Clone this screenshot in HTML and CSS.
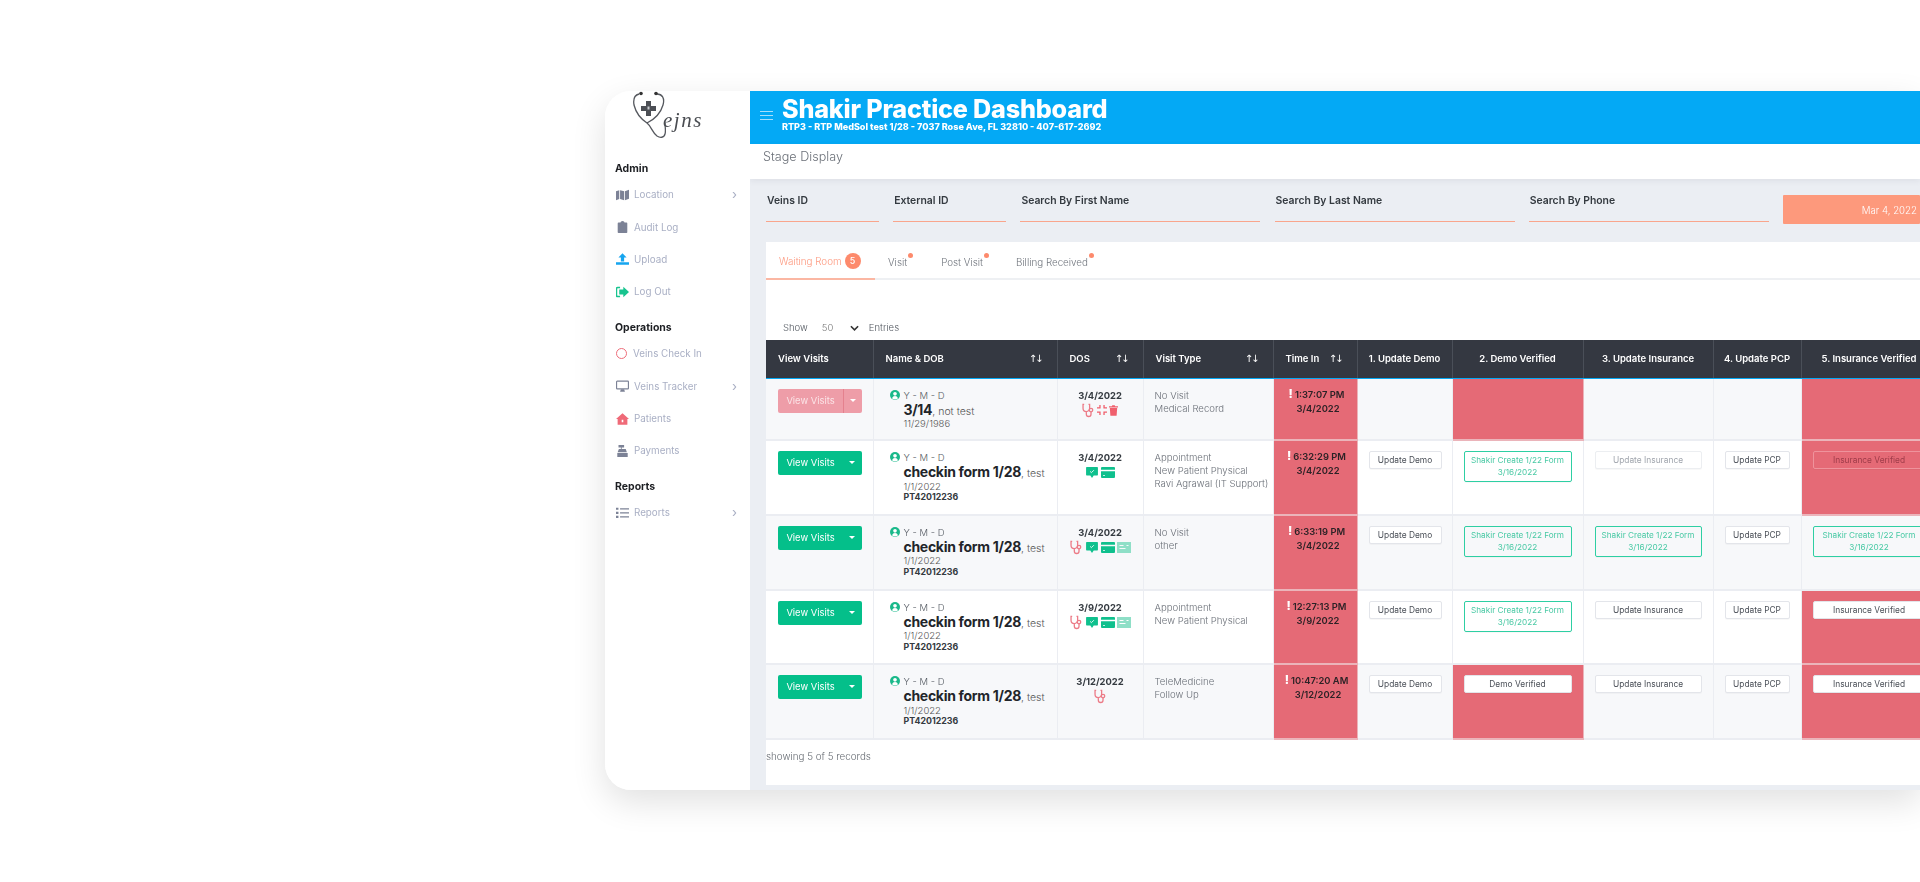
FILE: index.html
```html
<!DOCTYPE html>
<html lang="en">
<head>
<meta charset="utf-8">
<title>Shakir Practice Dashboard</title>
<link rel="stylesheet" href="styles.css">
</head>
<body>
<svg class="sprite" width="0" height="0" aria-hidden="true">
  <symbol id="i-map" viewBox="0 0 16 14"><path d="M0 2.5 4 1v11l-4 1.5zM5 1l5 1.5v11L5 12zM11 2.500 16 .5v11l-5 2z" fill="currentColor"/></symbol>
  <symbol id="i-clip" viewBox="0 0 12 15"><path d="M1 2h2.500a2.500 2 0 0 1 5 0H11a1 1 0 0 1 1 1v11a1 1 0 0 1-1 1H1a1 1 0 0 1-1-1V3a1 1 0 0 1 1-1z" fill="currentColor"/></symbol>
  <symbol id="i-up" viewBox="0 0 16 14"><path d="M8 0l5 5H10v5H6V5H3zM0 11h16v3H0z" fill="currentColor"/></symbol>
  <symbol id="i-out" viewBox="0 0 16 13"><path d="M5 1H2a1.500 1.500 0 0 0-1.500 1.500v8A1.500 1.500 0 0 0 2 12h3" fill="none" stroke="currentColor" stroke-width="2"/><path d="M9 0l7 6.500L9 13V9.500H4v-6h5z" fill="currentColor"/></symbol>
  <symbol id="i-desk" viewBox="0 0 16 14"><path d="M1.500 1h13a.800.800 0 0 1 .800.800v8a.800.800 0 0 1-.800.800h-13a.800.800 0 0 1-.800-.800v-8A.800.800 0 0 1 1.500 1z" fill="none" stroke="currentColor" stroke-width="1.400"/><path d="M5 14l1-3h4l1 3z" fill="currentColor"/></symbol>
  <symbol id="i-home" viewBox="0 0 16 14"><path d="M8 0l8 7h-2v7H2V7H0zM7 8v3h2V8z" fill="currentColor" fill-rule="evenodd"/></symbol>
  <symbol id="i-cash" viewBox="0 0 14 15"><path d="M2 0h7v3H6v2h5l1.500 4H.9L2.500 5H5V3H2zM.5 10h13v5H.5z" fill="currentColor"/></symbol>
  <symbol id="i-list" viewBox="0 0 16 13"><path d="M0 0h3v2.600H0zM0 5h3v2.600H0zM0 10h3v2.600H0zM5 .5h11v1.600H5zM5 5.500h11v1.600H5zM5 10.500h11v1.600H5z" fill="currentColor"/></symbol>
  <symbol id="i-user" viewBox="0 0 12 12"><circle cx="6" cy="6" r="6" fill="currentColor"/><circle cx="6" cy="4.600" r="2.200" fill="#fff"/><path d="M2.400 9.800a3.800 3.800 0 0 1 7.200 0 5 5 0 0 1-7.200 0z" fill="#fff"/></symbol>
  <symbol id="i-steth" viewBox="0 0 15 16"><path d="M2.500 1H1.200v4.500a3.800 3.800 0 0 0 7.600 0V1H7.500M5 9.500v2.700a2.700 2.700 0 0 0 5.400 0V9.500" fill="none" stroke="currentColor" stroke-width="1.500"/><circle cx="10.400" cy="7.500" r="2" fill="none" stroke="currentColor" stroke-width="1.500"/></symbol>
  <symbol id="i-comp" viewBox="0 0 13 13"><path d="M4.700 0v4.700H0V3h3V0zM8.300 0h1.700v3h3v1.700H8.300zM0 8.300h4.700V13H3v-3H0zM8.300 8.300H13V10h-3v3H8.300z" fill="currentColor"/></symbol>
  <symbol id="i-trash" viewBox="0 0 11 13"><path d="M0 1.200h3.500L4 .2h3l.5 1H11v1.500H0zM1 3.500h9l-.7 9.500H1.700z" fill="currentColor"/></symbol>
  <symbol id="i-chat" viewBox="0 0 14 13"><path d="M.8 0h12.400a.8.8 0 0 1 .8.800v8.400a.8.800 0 0 1-.8.800H9l-2 3-2-3H.8a.8.800 0 0 1-.8-.8V.8A.8.800 0 0 1 .8 0z" fill="currentColor"/><path d="M4.800 5.200l1.500 1.500 2.900-2.900" fill="none" stroke="#fff" stroke-width="1"/></symbol>
  <symbol id="i-card" viewBox="0 0 14 11"><path d="M1 0h12a1 1 0 0 1 1 1v1.800H0V1a1 1 0 0 1 1-1zM0 4.200h14V10a1 1 0 0 1-1 1H1a1 1 0 0 1-1-1zM2 8v.8h2V8z" fill="currentColor" fill-rule="evenodd"/></symbol>
  <symbol id="i-check" viewBox="0 0 14 11"><path d="M0 0h14v11H0zM2.500 3v1h4V3zM2.500 6v1h6V6zM9.500 3v1h2V3z" fill="currentColor" fill-rule="evenodd"/></symbol>
</svg>

<div class="stage">
<div class="window">
  <aside class="side">
    <div class="logo">
      <svg class="logo-mark" viewBox="0 0 70 50" aria-hidden="true">
        <path d="M6 3C2 4 0 8 1 14c2 8 7 14 13 18 4 3 5 9 10 13 3 2 7 2 8-2 1-3 0-7 0-11M24 3c5 0 8 4 6 11-2 7-8 14-16 18" fill="none" stroke="#55585e" stroke-width="1.300"/>
        <circle cx="8" cy="2.500" r="1.800" fill="#333"/><circle cx="23" cy="2.500" r="1.800" fill="#333"/>
        <path d="M13 10h5v5h5v5h-5v5h-5v-5H8v-5h5z" fill="#4c4f55"/>
        <path d="M14.500 15.500h2v3h-2z" fill="#c9ccd1"/>
        <text class="logo-text" x="30" y="36">ejns</text>
      </svg>
    </div>
    <h4 class="sec">Admin</h4>
    <a class="item"><svg class="ic grey"><use href="#i-map"/></svg><span>Location</span><b class="chev">›</b></a>
    <a class="item"><svg class="ic grey"><use href="#i-clip"/></svg><span>Audit Log</span></a>
    <a class="item"><svg class="ic blue"><use href="#i-up"/></svg><span>Upload</span></a>
    <a class="item"><svg class="ic green"><use href="#i-out"/></svg><span>Log Out</span></a>
    <h4 class="sec sec-gap">Operations</h4>
    <a class="item"><i class="ring"></i><span>Veins Check In</span></a>
    <a class="item"><svg class="ic grey"><use href="#i-desk"/></svg><span>Veins Tracker</span><b class="chev">›</b></a>
    <a class="item"><svg class="ic red"><use href="#i-home"/></svg><span>Patients</span></a>
    <a class="item"><svg class="ic grey"><use href="#i-cash"/></svg><span>Payments</span></a>
    <h4 class="sec sec-gap">Reports</h4>
    <a class="item"><svg class="ic grey"><use href="#i-list"/></svg><span>Reports</span><b class="chev">›</b></a>
  </aside>

  <main class="main">
    <header class="top">
      <div class="burger"><i></i><i></i><i></i></div>
      <div>
        <h1>Shakir Practice Dashboard</h1>
        <p>RTP3 - RTP MedSol test 1/28 - 7037 Rose Ave, FL 32810 - 407-617-2692</p>
      </div>
    </header>
    <div class="crumb">Stage Display</div>

    <div class="content">
      <div class="filters">
        <label class="field">Veins ID</label>
        <label class="field">External ID</label>
        <label class="field">Search By First Name</label>
        <label class="field">Search By Last Name</label>
        <label class="field">Search By Phone</label>
        <div class="date">Mar 4, 2022</div>
      </div>

      <section class="card">
        <nav class="tabs">
          <a class="tab active">Waiting Room<span class="badge">5</span></a>
          <a class="tab">Visit<i class="dot"></i></a>
          <a class="tab">Post Visit<i class="dot"></i></a>
          <a class="tab">Billing Received<i class="dot"></i></a>
        </nav>
        <div class="show">
          <span>Show</span>
          <span class="select"><span>50</span><svg viewBox="0 0 10 6"><path d="M1 1l4 4 4-4" fill="none" stroke="#333" stroke-width="1.800"/></svg></span>
          <span>Entries</span>
        </div>

        <table class="grid">
          <colgroup>
            <col class="c1"><col class="c2"><col class="c3"><col class="c4"><col class="c5"><col class="c6"><col class="c7"><col class="c8"><col class="c9"><col class="c10">
          </colgroup>
          <thead>
            <tr>
              <th class="h-view">View Visits</th>
              <th><div class="sort"><span>Name &amp; DOB</span><span class="arrows">↑↓</span></div></th>
              <th><div class="sort"><span>DOS</span><span class="arrows">↑↓</span></div></th>
              <th><div class="sort"><span>Visit Type</span><span class="arrows">↑↓</span></div></th>
              <th><div class="sort"><span>Time In</span><span class="arrows">↑↓</span></div></th>
              <th class="mid">1. Update Demo</th>
              <th class="mid">2. Demo Verified</th>
              <th class="mid">3. Update Insurance</th>
              <th class="mid">4. Update PCP</th>
              <th class="mid">5. Insurance Verified</th>
            </tr>
          </thead>
          <tbody>
            <tr class="r1">
              <td><div class="split off"><span>View Visits</span><span class="caret"></span></div></td>
              <td class="who">
                <div class="ymd"><svg class="u"><use href="#i-user"/></svg>Y - M - D</div>
                <div class="nm"><b>3/14</b>, not test</div>
                <div class="dob">11/29/1986</div>
              </td>
              <td class="dos">
                <b>3/4/2022</b>
                <div class="icons"><svg class="s"><use href="#i-steth"/></svg><svg class="k red2"><use href="#i-comp"/></svg><svg class="t red2"><use href="#i-trash"/></svg></div>
              </td>
              <td class="vt">No Visit<br>Medical Record</td>
              <td class="alert"><div class="tm"><i>!</i>1:37:07 PM</div><div>3/4/2022</div></td>
              <td></td><td class="alert"></td><td></td><td></td><td class="alert"></td>
            </tr>
            <tr>
              <td><div class="split"><span>View Visits</span><span class="caret"></span></div></td>
              <td class="who">
                <div class="ymd"><svg class="u"><use href="#i-user"/></svg>Y - M - D</div>
                <div class="nm"><b>checkin form 1/28</b>, test</div>
                <div class="dob">1/1/2022</div>
                <div class="pt">PT42012236</div>
              </td>
              <td class="dos">
                <b>3/4/2022</b>
                <div class="icons"><svg class="c"><use href="#i-chat"/></svg><svg class="c"><use href="#i-card"/></svg></div>
              </td>
              <td class="vt">Appointment<br>New Patient Physical<br>Ravi Agrawal (IT Support)</td>
              <td class="alert"><div class="tm"><i>!</i>6:32:29 PM</div><div>3/4/2022</div></td>
              <td><a class="btn">Update Demo</a></td>
              <td><a class="btn ok">Shakir Create 1/22 Form<br>3/16/2022</a></td>
              <td><a class="btn dim">Update Insurance</a></td>
              <td><a class="btn">Update PCP</a></td>
              <td class="alert"><a class="btn ghost">Insurance Verified</a></td>
            </tr>
            <tr>
              <td><div class="split"><span>View Visits</span><span class="caret"></span></div></td>
              <td class="who">
                <div class="ymd"><svg class="u"><use href="#i-user"/></svg>Y - M - D</div>
                <div class="nm"><b>checkin form 1/28</b>, test</div>
                <div class="dob">1/1/2022</div>
                <div class="pt">PT42012236</div>
              </td>
              <td class="dos">
                <b>3/4/2022</b>
                <div class="icons"><svg class="s"><use href="#i-steth"/></svg><svg class="c"><use href="#i-chat"/></svg><svg class="c"><use href="#i-card"/></svg><svg class="c pale"><use href="#i-check"/></svg></div>
              </td>
              <td class="vt">No Visit<br>other</td>
              <td class="alert"><div class="tm"><i>!</i>6:33:19 PM</div><div>3/4/2022</div></td>
              <td><a class="btn">Update Demo</a></td>
              <td><a class="btn ok">Shakir Create 1/22 Form<br>3/16/2022</a></td>
              <td><a class="btn ok">Shakir Create 1/22 Form<br>3/16/2022</a></td>
              <td><a class="btn">Update PCP</a></td>
              <td><a class="btn ok">Shakir Create 1/22 Form<br>3/16/2022</a></td>
            </tr>
            <tr>
              <td><div class="split"><span>View Visits</span><span class="caret"></span></div></td>
              <td class="who">
                <div class="ymd"><svg class="u"><use href="#i-user"/></svg>Y - M - D</div>
                <div class="nm"><b>checkin form 1/28</b>, test</div>
                <div class="dob">1/1/2022</div>
                <div class="pt">PT42012236</div>
              </td>
              <td class="dos">
                <b>3/9/2022</b>
                <div class="icons"><svg class="s"><use href="#i-steth"/></svg><svg class="c"><use href="#i-chat"/></svg><svg class="c"><use href="#i-card"/></svg><svg class="c pale"><use href="#i-check"/></svg></div>
              </td>
              <td class="vt">Appointment<br>New Patient Physical</td>
              <td class="alert"><div class="tm"><i>!</i>12:27:13 PM</div><div>3/9/2022</div></td>
              <td><a class="btn">Update Demo</a></td>
              <td><a class="btn ok">Shakir Create 1/22 Form<br>3/16/2022</a></td>
              <td><a class="btn">Update Insurance</a></td>
              <td><a class="btn">Update PCP</a></td>
              <td class="alert"><a class="btn">Insurance Verified</a></td>
            </tr>
            <tr>
              <td><div class="split"><span>View Visits</span><span class="caret"></span></div></td>
              <td class="who">
                <div class="ymd"><svg class="u"><use href="#i-user"/></svg>Y - M - D</div>
                <div class="nm"><b>checkin form 1/28</b>, test</div>
                <div class="dob">1/1/2022</div>
                <div class="pt">PT42012236</div>
              </td>
              <td class="dos">
                <b>3/12/2022</b>
                <div class="icons"><svg class="s"><use href="#i-steth"/></svg></div>
              </td>
              <td class="vt">TeleMedicine<br>Follow Up</td>
              <td class="alert"><div class="tm"><i>!</i>10:47:20 AM</div><div>3/12/2022</div></td>
              <td><a class="btn">Update Demo</a></td>
              <td class="alert"><a class="btn">Demo Verified</a></td>
              <td><a class="btn">Update Insurance</a></td>
              <td><a class="btn">Update PCP</a></td>
              <td class="alert"><a class="btn">Insurance Verified</a></td>
            </tr>
          </tbody>
        </table>
        <div class="records">showing 5 of 5 records</div>
      </section>
    </div>
  </main>
</div>
</div>
</body>
</html>
```

FILE: styles.css
```css
* { box-sizing: border-box; }
html, body { margin: 0; height: 100%; background: #fff; overflow: hidden; }
body { font-family: Inter, "Open Sans", sans-serif; color: #343a40; }
.sprite { position: absolute; }

.stage { padding: 91px 0 0 605px; height: 882px; overflow: hidden; }
.window {
  display: flex; height: 699px; width: 1315px;
  border-radius: 26px 0 0 26px;
  box-shadow: 0 12px 34px rgba(0,0,0,.12);
  filter: blur(.35px);
  background: #fff;
}

/* sidebar */
.side { width: 145px; flex: none; background: #fff; border-radius: 26px 0 0 26px; padding: 0 10px; }
.logo { height: 63px; }
.logo-mark { display: block; width: 70px; height: 50px; margin-left: 18px; }
.logo-text { font: italic 21px "Liberation Serif", serif; letter-spacing: 1.500px; fill: #4a4d52; }
.sec { margin: 8px 0 0; font-size: 10.500px; line-height: 13px; font-weight: 700; color: #1d1f23; }
.sec-gap { margin-top: 13px; }
.item { display: flex; align-items: center; height: 32.400px; font-size: 9.800px; color: #a9afc4; position: relative; }
.sec + .item { margin-top: 3.500px; }
.ic { width: 13px; height: 12px; margin: 0 5px 0 1px; flex: none; }
.grey { color: #7c8296; }
.blue { color: #16a5ef; }
.green { color: #18c48f; }
.red { color: #ef6a78; }
.ring { width: 11px; height: 11px; border: 1.300px solid #ee6d7a; border-radius: 50%; margin: 0 6px 0 1px; flex: none; }
.chev { margin-left: auto; margin-right: 2px; font-size: 13px; font-weight: 400; color: #a9afc4; line-height: 1; padding-right: 1px; }

/* main */
.main { flex: 1; min-width: 0; display: flex; flex-direction: column; background: #ebeef3; overflow: hidden; }
.top { height: 53px; background: #04a9f5; display: flex; align-items: flex-start; color: #fff; padding: 5px 0 0 10px; flex: none; }
.burger { width: 13px; margin: 15px 9px 0 0; display: flex; flex-direction: column; gap: 3px; }
.burger i { display: block; height: 1px; background: #a7dffb; }
.top h1 { margin: 0; font-size: 25.200px; line-height: 26px; font-weight: 800; letter-spacing: -.2px; white-space: nowrap; }
.top p { margin: -1px 0 0; font-size: 9.050px; line-height: 11px; font-weight: 800; white-space: nowrap; }
.crumb { height: 35px; flex: none; background: #fff; padding: 5px 0 0 13px; font-size: 12.600px; line-height: 15px; font-weight: 300; color: #6b7078; box-shadow: 0 2px 6px rgba(60,70,90,.08); }

.content { flex: 1; padding: 16px 0 5px 16px; display: flex; flex-direction: column; min-height: 0; }
.filters { display: grid; grid-template-columns: 113px 113px 240px 240px 240px 1fr; column-gap: 14.200px; height: 47px; flex: none; }
.field { display: block; height: 27px; border-bottom: 1px solid #f9a58c; font-size: 10.400px; line-height: 12px; font-weight: 600; color: #343a40; padding: 0 0 0 1px; }
.date { height: 29px; background: #fd997c; color: #fff; font-size: 9.700px; font-weight: 300; line-height: 31px; text-align: right; padding-right: 3px; border-radius: 1px; }

.card { flex: 1; background: #fff; min-height: 0; overflow: hidden; }
.tabs { display: flex; height: 38px; border-bottom: 2px solid #eef0f3; }
.tab { position: relative; display: flex; align-items: center; font-size: 9.800px; font-weight: 300; color: #6f747c; height: 38px; padding: 2px 20px 0 0; }
.tab:nth-child(2) { padding-left: 13px; }
.tab:nth-child(3) { padding-left: 14px; }
.tab:nth-child(4) { padding-left: 13px; }
.tab.active { color: #fd977d; width: 109px; padding: 2px 0 0 13px; border-bottom: 2px solid #fbb7a3; }
.badge { width: 16px; height: 16px; border-radius: 50%; background: #fd8a6c; color: #fff; font-size: 9px; font-weight: 500; text-align: center; line-height: 16px; margin-left: 3px; }
.dot { position: absolute; width: 5px; height: 5px; border-radius: 50%; background: #fd8a6c; right: 14px; top: 11px; }
.show { height: 60px; display: flex; align-items: flex-end; padding: 0 0 6px 17px; font-size: 9.500px; line-height: 13px; font-weight: 300; color: #4f555d; gap: 7px; }
.select { display: flex; align-items: center; justify-content: space-between; width: 46px; padding: 0 2px 0 7px; color: #777; margin-right: 1px; }
.select svg { width: 9px; height: 6px; }

.grid { border-collapse: collapse; table-layout: fixed; width: 1171px; }
.c1 { width: 107px; } .c2 { width: 184px; } .c3 { width: 86px; } .c4 { width: 130px; } .c5 { width: 84px; }
.c6 { width: 95px; } .c7 { width: 131px; } .c8 { width: 130px; } .c9 { width: 88px; } .c10 { width: 136px; }
.grid th { height: 38px; background: #343841; color: #fff; font-size: 9.500px; font-weight: 600; text-align: left; padding: 0 12px; border-right: 1px solid #4a4f58; border-bottom: 1px solid #04a9f5; white-space: nowrap; }
.grid th.mid { text-align: center; padding: 0; }
.sort { display: flex; justify-content: space-between; align-items: center; padding-right: 3px; }
.arrows { font-size: 10px; font-weight: 400; letter-spacing: -2px; font-family: "DejaVu Sans", sans-serif; }
.grid td { vertical-align: top; padding: 10px 11px 0; border: 1px solid #ebedf2; border-width: 0 1px 2px 0; font-size: 9.600px; height: 74.800px; background: #fff; }
.grid tbody tr:nth-child(odd) td { background: #f7f8fa; }
.grid .r1 td { height: 62px; }
.grid tbody tr td.alert { background: #e56a76; border-color: #ebb4ba; text-align: center; color: #2c2226; font-weight: 600; font-size: 9.400px; line-height: 14px; padding: 9px 4px 0; }
.grid tbody tr td.alert:nth-child(5) { padding: 9px 2px 0 8px; }
.tm { margin-left: -3px; }
.tm i { display: inline-block; color: #fff; font-style: normal; font-weight: 800; font-size: 12px; line-height: 10px; margin-right: 2px; }

.split { display: flex; height: 24px; width: 84px; margin-left: 1px; background: #04bf8a; color: #fff; border-radius: 2px; font-size: 9.400px; font-weight: 400; }
.split span:first-child { width: 65px; text-align: center; line-height: 24px; }
.split .caret { flex: 1; position: relative; }
.split .caret::after { content: ""; position: absolute; left: 6px; top: 10px; border: 3px solid transparent; border-top-color: #fff; }
.split.off { background: #ee9da8; color: #fbe4e7; }
.split.off .caret { border-left: 1px solid #e4818e; }

.who { padding-left: 16px !important; padding-right: 0 !important; position: relative; color: #555; }
.who > div { padding-left: 14px; white-space: nowrap; }
.ymd { font-size: 9.500px; line-height: 13px; font-weight: 300; color: #555b63; position: relative; }
.u { position: absolute; left: 0; top: 1px; width: 10px; height: 10px; color: #19b98a; }
.nm { font-size: 10.500px; line-height: 16px; color: #555; font-weight: 300; }
.nm b { font-size: 14px; font-weight: 700; color: #22252a; letter-spacing: -.3px; }
.dob { font-size: 9.500px; line-height: 13px; font-weight: 300; color: #555; margin-top: -2.500px; }
.pt { font-size: 8.800px; line-height: 11px; font-weight: 700; color: #343a40; margin-top: -1.500px; }

.dos { text-align: center; padding-left: 2px !important; padding-right: 2px !important; }
.dos b { font-size: 9.400px; font-weight: 700; color: #343a40; display: block; line-height: 14px; }
.icons { display: flex; justify-content: center; align-items: center; gap: 2px; height: 15px; }
.icons svg { flex: none; }
.s { width: 13px; height: 15px; color: #ec7b87; }
.k { width: 10px; height: 10px; }
.t { width: 9px; height: 11px; }
.red2 { color: #f0606d; }
.c { width: 14px; height: 11px; color: #0fc08d; }
.pale { color: #8fdfc7; }

.vt { font-size: 8.800px; line-height: 13px; font-weight: 300; color: #6a6f77; padding-left: 11px !important; padding-right: 0 !important; white-space: nowrap; }

.btn { display: block; width: 100%; min-height: 18px; padding: 2px 1px; background: #fff; border: 1px solid #e3e5ea; border-radius: 2px; color: #4a4f57; font-size: 8.400px; line-height: 12px; font-weight: 400; text-align: center; white-space: nowrap; box-shadow: 0 1px 1px rgba(0,0,0,.03); }
.grid td:nth-child(6) .btn { width: 73px; }
.grid td:nth-child(9) .btn { width: 65px; }
.grid tbody tr td.alert .btn { margin: 1px 7px 0; width: calc(100% - 14px); font-weight: 400; line-height: 12px; font-size: 8.400px; color: #4a4f57; }
.btn.ok { background: transparent; border-color: #2ecfa3; color: #48c9a4; min-height: 31px; font-size: 8.200px; }
.btn.dim { color: #a0a5ad; border-color: #eceef1; }
.grid tbody tr td.alert .btn.ghost { background: transparent; border-color: #ef939c; color: #9e3c49; }

.records { font-size: 9.800px; font-weight: 300; color: #666b72; padding-top: 10px; line-height: 13px; }
```
